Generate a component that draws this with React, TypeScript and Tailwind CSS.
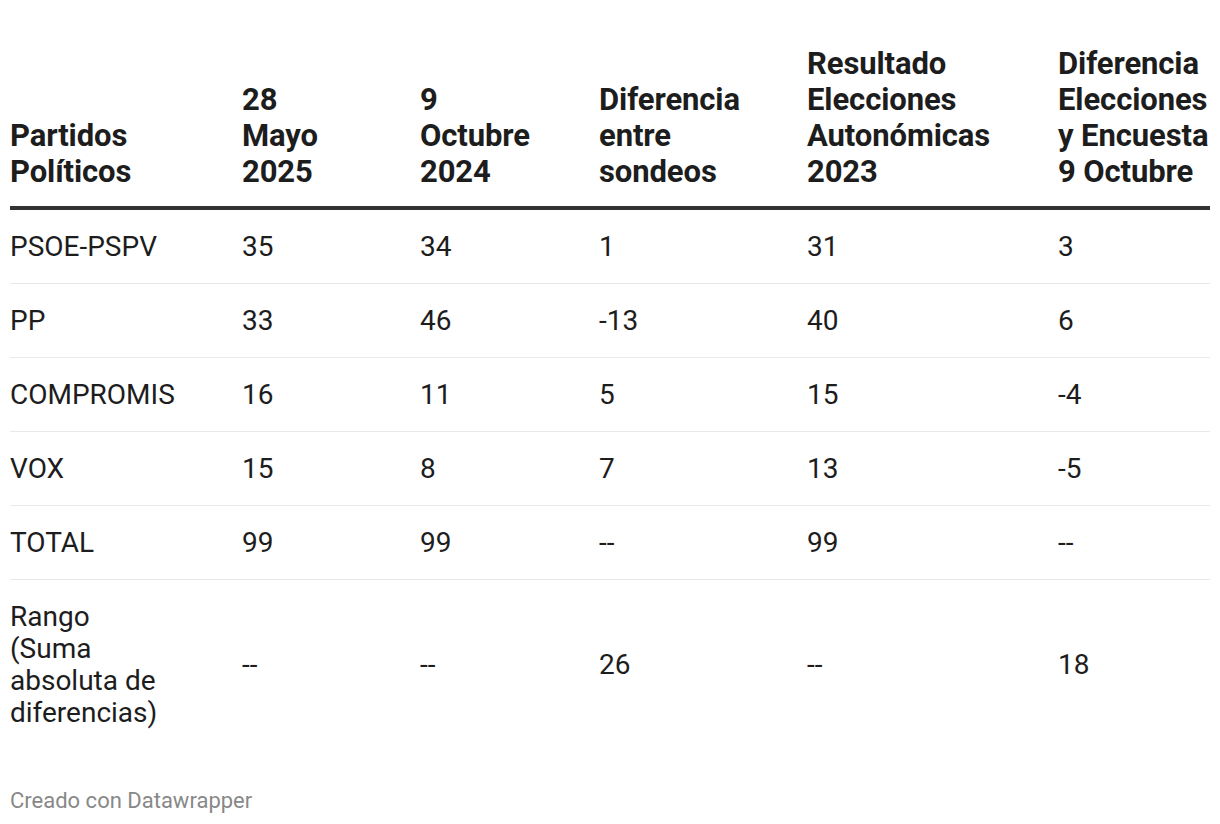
const headers = [
  ['Partidos', 'Políticos'],
  ['28', 'Mayo', '2025'],
  ['9', 'Octubre', '2024'],
  ['Diferencia', 'entre', 'sondeos'],
  ['Resultado', 'Elecciones', 'Autonómicas', '2023'],
  ['Diferencia', 'Elecciones', 'y Encuesta', '9 Octubre'],
]

const widths = ['w-[232px]', 'w-[178px]', 'w-[179px]', 'w-[208px]', 'w-[251px]', 'w-[152px]']

const rows = [
  ['PSOE-PSPV', '35', '34', '1', '31', '3'],
  ['PP', '33', '46', '-13', '40', '6'],
  ['COMPROMIS', '16', '11', '5', '15', '-4'],
  ['VOX', '15', '8', '7', '13', '-5'],
  ['TOTAL', '99', '99', '--', '99', '--'],
]

export default function App() {
  return (
    <div className="min-h-screen bg-white px-[10px] pt-[46px] font-['Roboto',sans-serif] text-[#1d1d1d]">
      <table className="w-[1200px] border-collapse table-fixed">
        <thead>
          <tr className="border-b-[4px] border-[#333]">
            {headers.map((h, i) => (
              <th
                key={i}
                className={`${widths[i]} pb-[16px] text-left align-bottom text-[31px] font-bold leading-[36px] tracking-[-0.1px]`}
              >
                {h.map((line, j) => (
                  <div key={j} className="whitespace-nowrap">{line}</div>
                ))}
              </th>
            ))}
          </tr>
        </thead>
        <tbody>
          {rows.map((r, i) => (
            <tr key={i} className="border-b border-[#e9e9e9]">
              {r.map((c, j) => (
                <td key={j} className="pt-[21px] pb-[20px] align-middle text-[28px] leading-[32px]">
                  {c}
                </td>
              ))}
            </tr>
          ))}
          <tr>
            <td className="pt-[21px] pb-[20px] align-middle text-[28px] leading-[32px]">
              Rango
              <br />
              (Suma
              <br />
              absoluta de
              <br />
              diferencias)
            </td>
            {['--', '--', '26', '--', '18'].map((c, j) => (
              <td key={j} className="align-middle text-[28px] leading-[32px]">
                {c}
              </td>
            ))}
          </tr>
        </tbody>
      </table>
      <div className="mt-[39px] text-[22px] leading-[26px] text-[#888]">Creado con Datawrapper</div>
    </div>
  )
}
